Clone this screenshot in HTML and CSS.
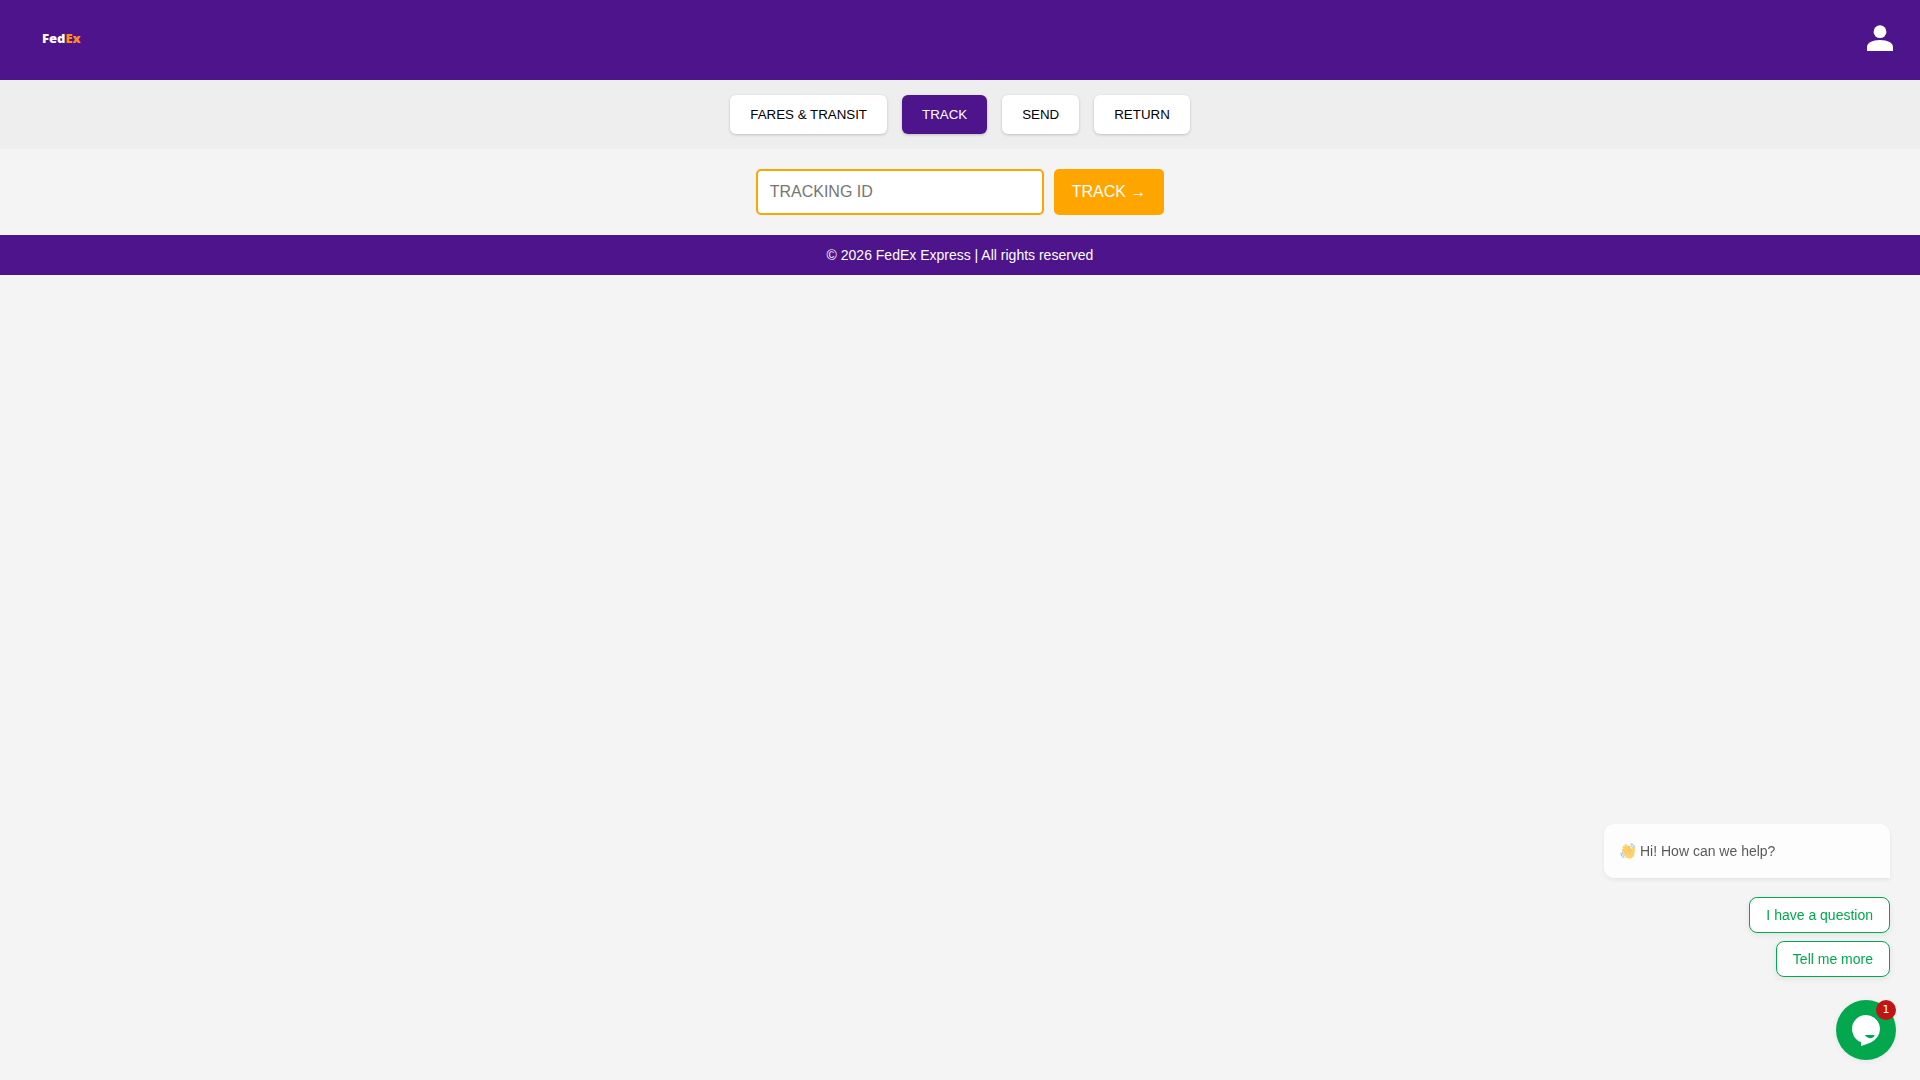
FILE: index.html
```html
<!DOCTYPE html>
<html lang="en">
  <head>
    <meta charset="UTF-8" />
    <meta name="viewport" content="width=device-width, initial-scale=1.0" />
    <title>FedEx Tracking</title>
    <link rel="stylesheet" href="styles.css">
  </head>
  <body>
    <header>
      <a href="#" class="logo">Fed<span>Ex</span></a>
      <a href="#" class="user-icon" aria-label="Account">
        <svg viewBox="0 0 40 40" width="40" height="40" fill="#fff">
          <circle cx="20" cy="13.7" r="6.4" />
          <path d="M20 22c-8 0-13 3-13 7v4h26v-4c0-4-5-7-13-7z" />
        </svg>
      </a>
    </header>

    <nav class="tabs">
      <button type="button">FARES &amp; TRANSIT</button>
      <button type="button" class="active">TRACK</button>
      <button type="button">SEND</button>
      <button type="button">RETURN</button>
    </nav>

    <main>
      <form class="track-form">
        <input type="text" placeholder="TRACKING ID" aria-label="Tracking ID" />
        <button type="submit">TRACK <span>→</span></button>
      </form>
    </main>

    <footer>© 2026 FedEx Express | All rights reserved</footer>

    <!-- Chat widget -->
    <div class="chat">
      <div class="chat-message">
        <svg viewBox="0 0 32 32" width="16" height="16" role="img" aria-label="Waving hand">
          <path fill="none" stroke="#5dadec" stroke-width="2" stroke-linecap="round" d="M22 2c4 0 7 3 7 7M22 6c2 0 3 1 4 3M2 20c0 5 2 8 6 9M5 20c0 3 1 4 3 5" />
          <path fill="#ffcc4d" d="M4 16c-2-3 1-5 3-3L5 9c-1-3 2-5 4-2l1 1-1-3c0-3 3-4 5-1l2 3c0-3 4-3 5 0l3 6 1-4c1-3 5-2 5 1l-1 11c0 6-5 10-11 10-4 0-7-2-9-6z" />
          <path fill="none" stroke="#ef9645" stroke-width="1" stroke-linecap="round" d="M7 13l6 8M10 8l6 9M16 7l4 8M24 13c-4 3-6 6-4 10" />
        </svg>
        Hi! How can we help?
      </div>
      <button type="button" class="chat-option">I have a question</button>
      <button type="button" class="chat-option">Tell me more</button>
      <button type="button" class="chat-toggle" aria-label="Open chat">
        <svg viewBox="0 0 60 60" width="60" height="60">
          <path fill="#fff" d="M30 15a14 14 0 0 0-5 27.100V46c4-1.500 9-2.500 13-5.500A14 14 0 0 0 30 15z" />
          <path fill="#03a84e" d="M29 35h9.500c-.3 4.200-7.500 4.200-9.500 0z" />
        </svg>
        <span class="badge">1</span>
      </button>
    </div>
  </body>
</html>
```
FILE: styles.css
```css
* {
  box-sizing: border-box;
}
body {
  font-family: "Liberation Sans", Arial, sans-serif;
  background-color: #f4f4f4;
  margin: 0;
}
button {
  font-family: inherit;
  border: none;
  cursor: pointer;
}
svg {
  display: block;
}
header {
  display: flex;
  justify-content: space-between;
  align-items: center;
  padding: 18px 20px 22px;
  background-color: #4d148c;
}
.logo {
  margin-left: 22px;
  font-family: "Open Sans", sans-serif;
  font-size: 13px;
  font-weight: 800;
  line-height: 18px;
  color: #fff;
  text-decoration: none;
}
.logo span {
  color: #ff8c1a;
}
.tabs {
  display: flex;
  justify-content: center;
  gap: 15px;
  padding: 15px;
  background-color: #eee;
}
.tabs button {
  padding: 12px 20px;
  border-radius: 6px;
  color: #000;
  background-color: #fff;
  box-shadow: 0 1px 3px rgba(0, 0, 0, 0.2);
}
.tabs .active {
  color: #fff;
  background-color: #4d148c;
}
main {
  padding: 20px;
}
.track-form {
  display: flex;
  justify-content: center;
  gap: 10px;
}
.track-form input {
  width: 288px;
  height: 46px;
  padding: 12px;
  border: 2px solid orange;
  border-radius: 5px;
  font-family: inherit;
  font-size: 16px;
}
.track-form button {
  padding: 12px 18px;
  border-radius: 5px;
  color: #fff;
  background-color: orange;
  font-size: 16px;
}
footer {
  padding: 12px;
  color: #fff;
  background-color: #4d148c;
  font-size: 14px;
  line-height: 16px;
  text-align: center;
}
.chat {
  position: fixed;
  right: 30px;
  bottom: 20px;
  display: flex;
  flex-direction: column;
  align-items: flex-end;
  gap: 8px;
  width: 286px;
}
.chat-message {
  display: flex;
  align-items: center;
  gap: 4px;
  width: 100%;
  margin-bottom: 11px;
  padding: 18px 16px;
  border-radius: 10px 10px 0 10px;
  color: #333;
  background-color: #fff;
  box-shadow: 0 2px 4px rgba(0, 0, 0, 0.08);
  font-size: 14px;
  line-height: 18px;
  opacity: 0.8;
}
.chat-option {
  padding: 0 16px;
  border: 1px solid #03a84e;
  border-radius: 8px;
  color: #03a84e;
  background-color: #fff;
  box-shadow: 0 2px 6px rgba(0, 0, 0, 0.08);
  font-size: 14px;
  line-height: 34px;
}
.chat-toggle {
  position: relative;
  margin: 15px -6px 0 0;
  padding: 0;
  border-radius: 50%;
  background-color: #03a84e;
  box-shadow: 0 1px 6px rgba(0, 0, 0, 0.06);
}
.badge {
  position: absolute;
  top: 0;
  right: 0;
  width: 20px;
  border-radius: 50%;
  color: #fff;
  background-color: #c11414;
  font-family: "DejaVu Sans", sans-serif;
  font-size: 11px;
  line-height: 20px;
}
```
